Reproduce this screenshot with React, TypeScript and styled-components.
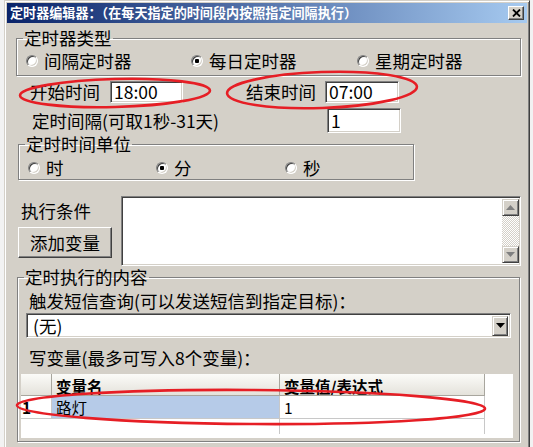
import styled, { createGlobalStyle } from "styled-components";

const FONT = `"Noto Sans CJK SC", "Liberation Sans", sans-serif`;

const GlobalStyle = createGlobalStyle`
  html, body { margin: 0; padding: 0; background: #f2f2f2; overflow: hidden; }
  body { font-family: ${FONT}; }
`;

const Window = styled.div`
  position: relative;
  box-sizing: content-box;
  margin-left: 4px;
  width: 520px;
  height: 460px;
  padding: 2px;
  border: 1px solid;
  border-color: #d4d0c8 #404040 #404040 #d4d0c8;
  box-shadow: inset 1px 1px 0 #fff, inset -1px -1px 0 #808080;
  background: #d4d0c8;
  color: #000;
  font-family: ${FONT};
  font-size: 17.5px;
  line-height: 20px;
`;

const TitleBar = styled.div`
  height: 20px;
  display: flex;
  align-items: center;
  justify-content: space-between;
  padding: 0 3px;
  background: linear-gradient(to right, #0a246a, #a6caf0);
  color: #fff;
  font-weight: bold;
  font-size: 13.1px;
  line-height: 20px;
  white-space: nowrap;
`;

const CloseButton = styled.div`
  box-sizing: border-box;
  width: 16px;
  height: 14px;
  display: flex;
  align-items: center;
  justify-content: center;
  background: #d4d0c8;
  border: 1px solid;
  border-color: #fff #404040 #404040 #fff;
  box-shadow: inset -1px -1px 0 #808080;
`;

const Group = styled.fieldset<{ $w: number; $ml: number; $mt: number; $pb: number }>`
  box-sizing: border-box;
  width: ${(p) => p.$w}px;
  min-inline-size: 0;
  margin: ${(p) => p.$mt}px 0 0 ${(p) => p.$ml}px;
  padding: 0 6px ${(p) => p.$pb}px 6px;
  border: 1px solid #808080;
  box-shadow: inset 1px 1px 0 #fff, 1px 1px 0 #fff;
`;

const Legend = styled.legend`
  padding: 0 1px;
  line-height: 18px;
  font-size: 17.5px;
`;

const RadioRow = styled.div<{ $mt: number }>`
  display: flex;
  align-items: center;
  height: 20px;
  margin-top: ${(p) => p.$mt}px;
  padding-left: 3px;
`;

const RadioOption = styled.label<{ $w: number }>`
  display: flex;
  align-items: center;
  width: ${(p) => p.$w}px;
  gap: 6px;
  white-space: nowrap;
`;

const RadioDot = styled.span<{ $checked?: boolean }>`
  box-sizing: border-box;
  width: 12px;
  height: 12px;
  border-radius: 50%;
  border: 1px solid;
  border-color: #808080 #fff #fff #808080;
  box-shadow: inset 1px 1px 0 #404040, inset -1px -1px 0 #d4d0c8;
  background: ${(p) =>
    p.$checked ? "radial-gradient(circle, #000 0 2px, #fff 2.5px)" : "#fff"};
`;

const Sunken = styled.div<{ $w: number; $h: number; $ml?: number }>`
  box-sizing: border-box;
  width: ${(p) => p.$w}px;
  height: ${(p) => p.$h}px;
  margin-left: ${(p) => p.$ml ?? 0}px;
  background: #fff;
  border: 1px solid;
  border-color: #808080 #fff #fff #808080;
  box-shadow: inset 1px 1px 0 #404040, inset -1px -1px 0 #d4d0c8;
  padding: 0 3px;
  display: flex;
  align-items: center;
  white-space: nowrap;
`;

const FieldRow = styled.div<{ $mt: number; $h: number; $pl: number }>`
  display: flex;
  align-items: center;
  height: ${(p) => p.$h}px;
  margin-top: ${(p) => p.$mt}px;
  padding-left: ${(p) => p.$pl}px;
`;

const Label = styled.span<{ $w?: number; $ml?: number }>`
  display: inline-block;
  ${(p) => (p.$w ? `width: ${p.$w}px;` : "")}
  margin-left: ${(p) => p.$ml ?? 0}px;
  white-space: nowrap;
`;

const ConditionRow = styled.div`
  display: flex;
  margin-top: 16px;
  margin-left: 11px;
  gap: 9px;
`;

const ConditionSide = styled.div`
  display: flex;
  flex-direction: column;
  width: 94px;
`;

const SideLabel = styled.div`
  margin: 5px 0 0 3px;
  height: 20px;
`;

const Button = styled.div`
  box-sizing: border-box;
  margin-top: 6px;
  height: 31px;
  width: 94px;
  display: flex;
  align-items: center;
  justify-content: center;
  background: #d4d0c8;
  border: 1px solid;
  border-color: #fff #404040 #404040 #fff;
  box-shadow: inset -1px -1px 0 #808080;
`;

const TextArea = styled.div`
  box-sizing: border-box;
  width: 400px;
  height: 70px;
  background: #fff;
  border: 1px solid;
  border-color: #808080 #fff #fff #808080;
  box-shadow: inset 1px 1px 0 #404040, inset -1px -1px 0 #d4d0c8;
  display: flex;
  justify-content: flex-end;
  padding: 2px 1px 2px 2px;
`;

const ScrollBar = styled.div`
  width: 17px;
  display: flex;
  flex-direction: column;
  justify-content: space-between;
  background: repeating-conic-gradient(#fff 0 25%, #d4d0c8 0 50%) 0 0 / 2px 2px;
`;

const ArrowButton = styled.div`
  box-sizing: border-box;
  width: 17px;
  height: 17px;
  display: flex;
  align-items: center;
  justify-content: center;
  background: #d4d0c8;
  border: 1px solid;
  border-color: #d4d0c8 #404040 #404040 #d4d0c8;
  box-shadow: inset 1px 1px 0 #fff, inset -1px -1px 0 #808080;
`;

const GroupLabel = styled.div<{ $mt: number }>`
  margin-top: ${(p) => p.$mt}px;
  padding-left: 5px;
  height: 20px;
  white-space: nowrap;
`;

const Select = styled.div`
  box-sizing: border-box;
  margin: 2px 0 0 2px;
  width: 485px;
  height: 25px;
  background: #fff;
  border: 1px solid;
  border-color: #808080 #fff #fff #808080;
  box-shadow: inset 1px 1px 0 #404040, inset -1px -1px 0 #d4d0c8;
  display: flex;
  align-items: center;
  justify-content: space-between;
  padding: 2px 2px 2px 6px;
`;

const DropButton = styled(ArrowButton)`
  width: 16px;
  height: 20px;
`;

const Grid = styled.div`
  margin: 6px 0 0 -3px;
  width: 492px;
  height: 64px;
  background: #fff;
  display: grid;
  grid-template-columns: 31px 228px 205px 1fr;
  grid-template-rows: 22px 23px 15px;
  align-content: start;
`;

const HeadCell = styled.div<{ $last?: boolean }>`
  background: ${(p) => (p.$last ? "#fff" : "linear-gradient(#fbfbf8, #e4e2db)")};
  border-right: ${(p) => (p.$last ? "none" : "1px solid #a8a69e")};
  border-bottom: ${(p) => (p.$last ? "none" : "1px solid #a8a69e")};
  font-weight: bold;
  font-size: 15.5px;
  line-height: 24px;
  padding-left: 4px;
  overflow: hidden;
  white-space: nowrap;
`;

const Cell = styled.div<{ $bg?: string; $right?: boolean; $bottom?: boolean; $bold?: boolean }>`
  background: ${(p) => p.$bg ?? "#fff"};
  border-right: ${(p) => (p.$right ? "1px solid #c8c8c8" : "none")};
  border-bottom: ${(p) => (p.$bottom ? "1px solid #c8c8c8" : "none")};
  font-size: 15.5px;
  font-weight: ${(p) => (p.$bold ? "bold" : "normal")};
  line-height: 22px;
  padding-left: ${(p) => (p.$bold ? 1 : 4)}px;
  white-space: nowrap;
`;

const Marks = styled.svg`
  position: absolute;
  left: -5px;
  top: -1px;
  pointer-events: none;
`;

const Tri = ({ up, color }: { up?: boolean; color: string }) => (
  <svg width="9" height="5" viewBox="0 0 9 5">
    {up ? (
      <polygon points="4.5,0 9,5 0,5" fill={color} />
    ) : (
      <polygon points="0,0 9,0 4.5,5" fill={color} />
    )}
  </svg>
);

export default function App() {
  return (
    <>
      <GlobalStyle />
      <Window>
        <TitleBar>
          <span>定时器编辑器：（在每天指定的时间段内按照指定间隔执行）</span>
          <CloseButton>
            <svg width="9" height="8" viewBox="0 0 9 8">
              <path d="M1 0.5 L8 7.5 M8 0.5 L1 7.5" stroke="#000" strokeWidth="1.8" />
            </svg>
          </CloseButton>
        </TitleBar>

        <Group $w={505} $ml={9} $mt={6} $pb={4}>
          <Legend>定时器类型</Legend>
          <RadioRow $mt={4}>
            <RadioOption $w={165}>
              <RadioDot />
              间隔定时器
            </RadioOption>
            <RadioOption $w={166}>
              <RadioDot $checked />
              每日定时器
            </RadioOption>
            <RadioOption $w={140}>
              <RadioDot />
              星期定时器
            </RadioOption>
          </RadioRow>
        </Group>

        <FieldRow $mt={5} $h={22} $pl={23}>
          <Label $w={80}>开始时间</Label>
          <Sunken $w={73} $h={22}>18:00</Sunken>
          <Label $ml={63} $w={79}>结束时间</Label>
          <Sunken $w={74} $h={22}>07:00</Sunken>
        </FieldRow>

        <FieldRow $mt={5} $h={25} $pl={25}>
          <Label $w={295}>定时间隔(可取1秒-31天)</Label>
          <Sunken $w={74} $h={25}>1</Sunken>
        </FieldRow>

        <Group $w={396} $ml={11} $mt={2} $pb={1}>
          <Legend>定时时间单位</Legend>
          <RadioRow $mt={5}>
            <RadioOption $w={128}>
              <RadioDot />时
            </RadioOption>
            <RadioOption $w={129}>
              <RadioDot $checked />分
            </RadioOption>
            <RadioOption $w={100}>
              <RadioDot />秒
            </RadioOption>
          </RadioRow>
        </Group>

        <ConditionRow>
          <ConditionSide>
            <SideLabel>执行条件</SideLabel>
            <Button>添加变量</Button>
          </ConditionSide>
          <TextArea>
            <ScrollBar>
              <ArrowButton>
                <Tri up color="#808080" />
              </ArrowButton>
              <ArrowButton>
                <Tri color="#808080" />
              </ArrowButton>
            </ScrollBar>
          </TextArea>
        </ConditionRow>

        <Group $w={503} $ml={10} $mt={2} $pb={3}>
          <Legend>定时执行的内容</Legend>
          <GroupLabel $mt={5}>触发短信查询(可以发送短信到指定目标)：</GroupLabel>
          <Select>
            <span>(无)</span>
            <DropButton>
              <Tri color="#000" />
            </DropButton>
          </Select>
          <GroupLabel $mt={10}>写变量(最多可写入8个变量)：</GroupLabel>
          <Grid>
            <HeadCell />
            <HeadCell>变量名</HeadCell>
            <HeadCell>变量值/表达式</HeadCell>
            <HeadCell $last />
            <Cell $right $bottom $bold $bg="#fff">1</Cell>
            <Cell $right $bottom $bg="#b6cbe8">路灯</Cell>
            <Cell $right $bottom>1</Cell>
            <Cell />
            <Cell />
            <Cell $right />
            <Cell $right />
            <Cell />
          </Grid>
        </Group>

        <Marks width="533" height="447" viewBox="0 0 533 447">
          <g fill="none" stroke="#e61e25" strokeWidth="2.6">
            <ellipse cx="115" cy="93" rx="95" ry="14" transform="rotate(-1.5 115 93)" />
            <ellipse cx="322" cy="90" rx="95" ry="18" transform="rotate(-2 322 90)" />
            <ellipse cx="251" cy="407" rx="234" ry="17" transform="rotate(0.4 251 407)" />
          </g>
        </Marks>
      </Window>
    </>
  );
}
